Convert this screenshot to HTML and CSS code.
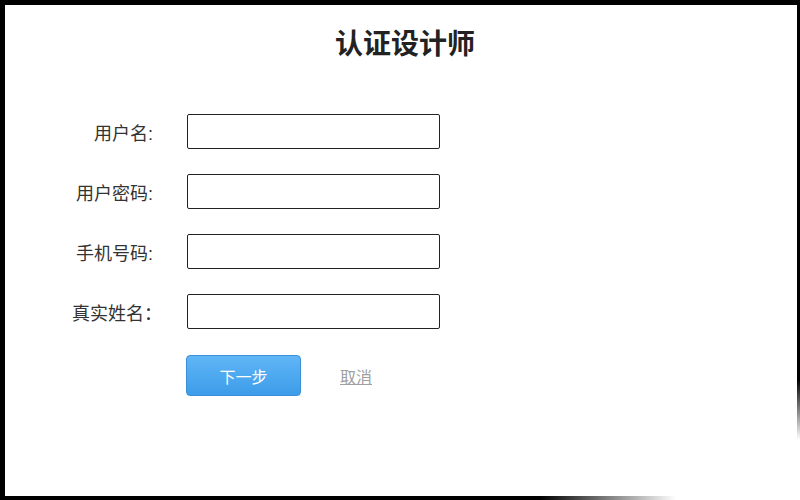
FILE: index.html
```html
<!DOCTYPE html>
<html lang="zh">
<head>
    <meta charset="UTF-8">
    <title>认证设计师</title>
    <link rel="stylesheet" href="styles.css">
</head>
<body>

<div class="window">
    <div class="edge-top"></div>
    <div class="middle">
        <div class="edge-left"></div>

        <div class="content">
            <h2>认证设计师</h2>

            <div class="form">
                <label for="username">用户名:</label>
                <input type="text" id="username">

                <label for="password">用户密码:</label>
                <input type="password" id="password">

                <label for="phone">手机号码:</label>
                <input type="text" id="phone">

                <label for="realname">真实姓名：</label>
                <input type="text" id="realname">
            </div>

            <div class="actions">
                <button class="next">下一步</button>
                <a class="cancel">取消</a>
            </div>
        </div>

        <div class="edge-right"></div>
    </div>
    <div class="edge-bottom"></div>
</div>

</body>
</html>
```

FILE: styles.css
```css
* {
    box-sizing: border-box;
    margin: 0;
    padding: 0;
}

body {
    font-family: "Liberation Sans", "Noto Sans CJK SC", sans-serif;
    background-color: #fff;
    color: #333;
}

.window {
    width: 800px;
    height: 500px;
    display: flex;
    flex-direction: column;
}

.edge-top {
    height: 5px;
    background-color: #000;
}

.edge-bottom {
    height: 4px;
    background: linear-gradient(to right, #000 540px, #fff 676px);
}

.middle {
    flex: 1;
    display: flex;
}

.edge-left {
    width: 5px;
    background-color: #000;
}

.edge-right {
    width: 3px;
    background: linear-gradient(to bottom, #000 375px, #fff 435px);
}

.content {
    flex: 1;
    padding-top: 20px;
}

h2 {
    text-align: center;
    font-size: 28px;
    line-height: 40px;
    font-weight: bold;
    color: #222;
    padding-left: 8px;
}

.form {
    margin-top: 49px;
    display: grid;
    grid-template-columns: 148px 253px;
    column-gap: 34px;
    row-gap: 25px;
    align-items: center;
}

.form label {
    text-align: right;
    font-size: 18px;
    color: #333;
    font-feature-settings: "halt";
}

.form input {
    height: 35px;
    border: 1px solid #222;
    border-radius: 2px;
    font-size: 14px;
    padding: 0 8px;
}

.actions {
    margin-top: 26px;
    margin-left: 181px;
    display: flex;
    align-items: center;
    gap: 39px;
}

.next {
    width: 115px;
    height: 41px;
    border: 1px solid #3a8fd9;
    border-radius: 4px;
    background: linear-gradient(to bottom, #60b6f6, #3d9ce9);
    color: #fff;
    font-family: inherit;
    font-size: 16px;
    cursor: pointer;
}

.cancel {
    font-size: 16px;
    color: #a0a0a0;
    text-decoration: underline;
    cursor: pointer;
}
```
